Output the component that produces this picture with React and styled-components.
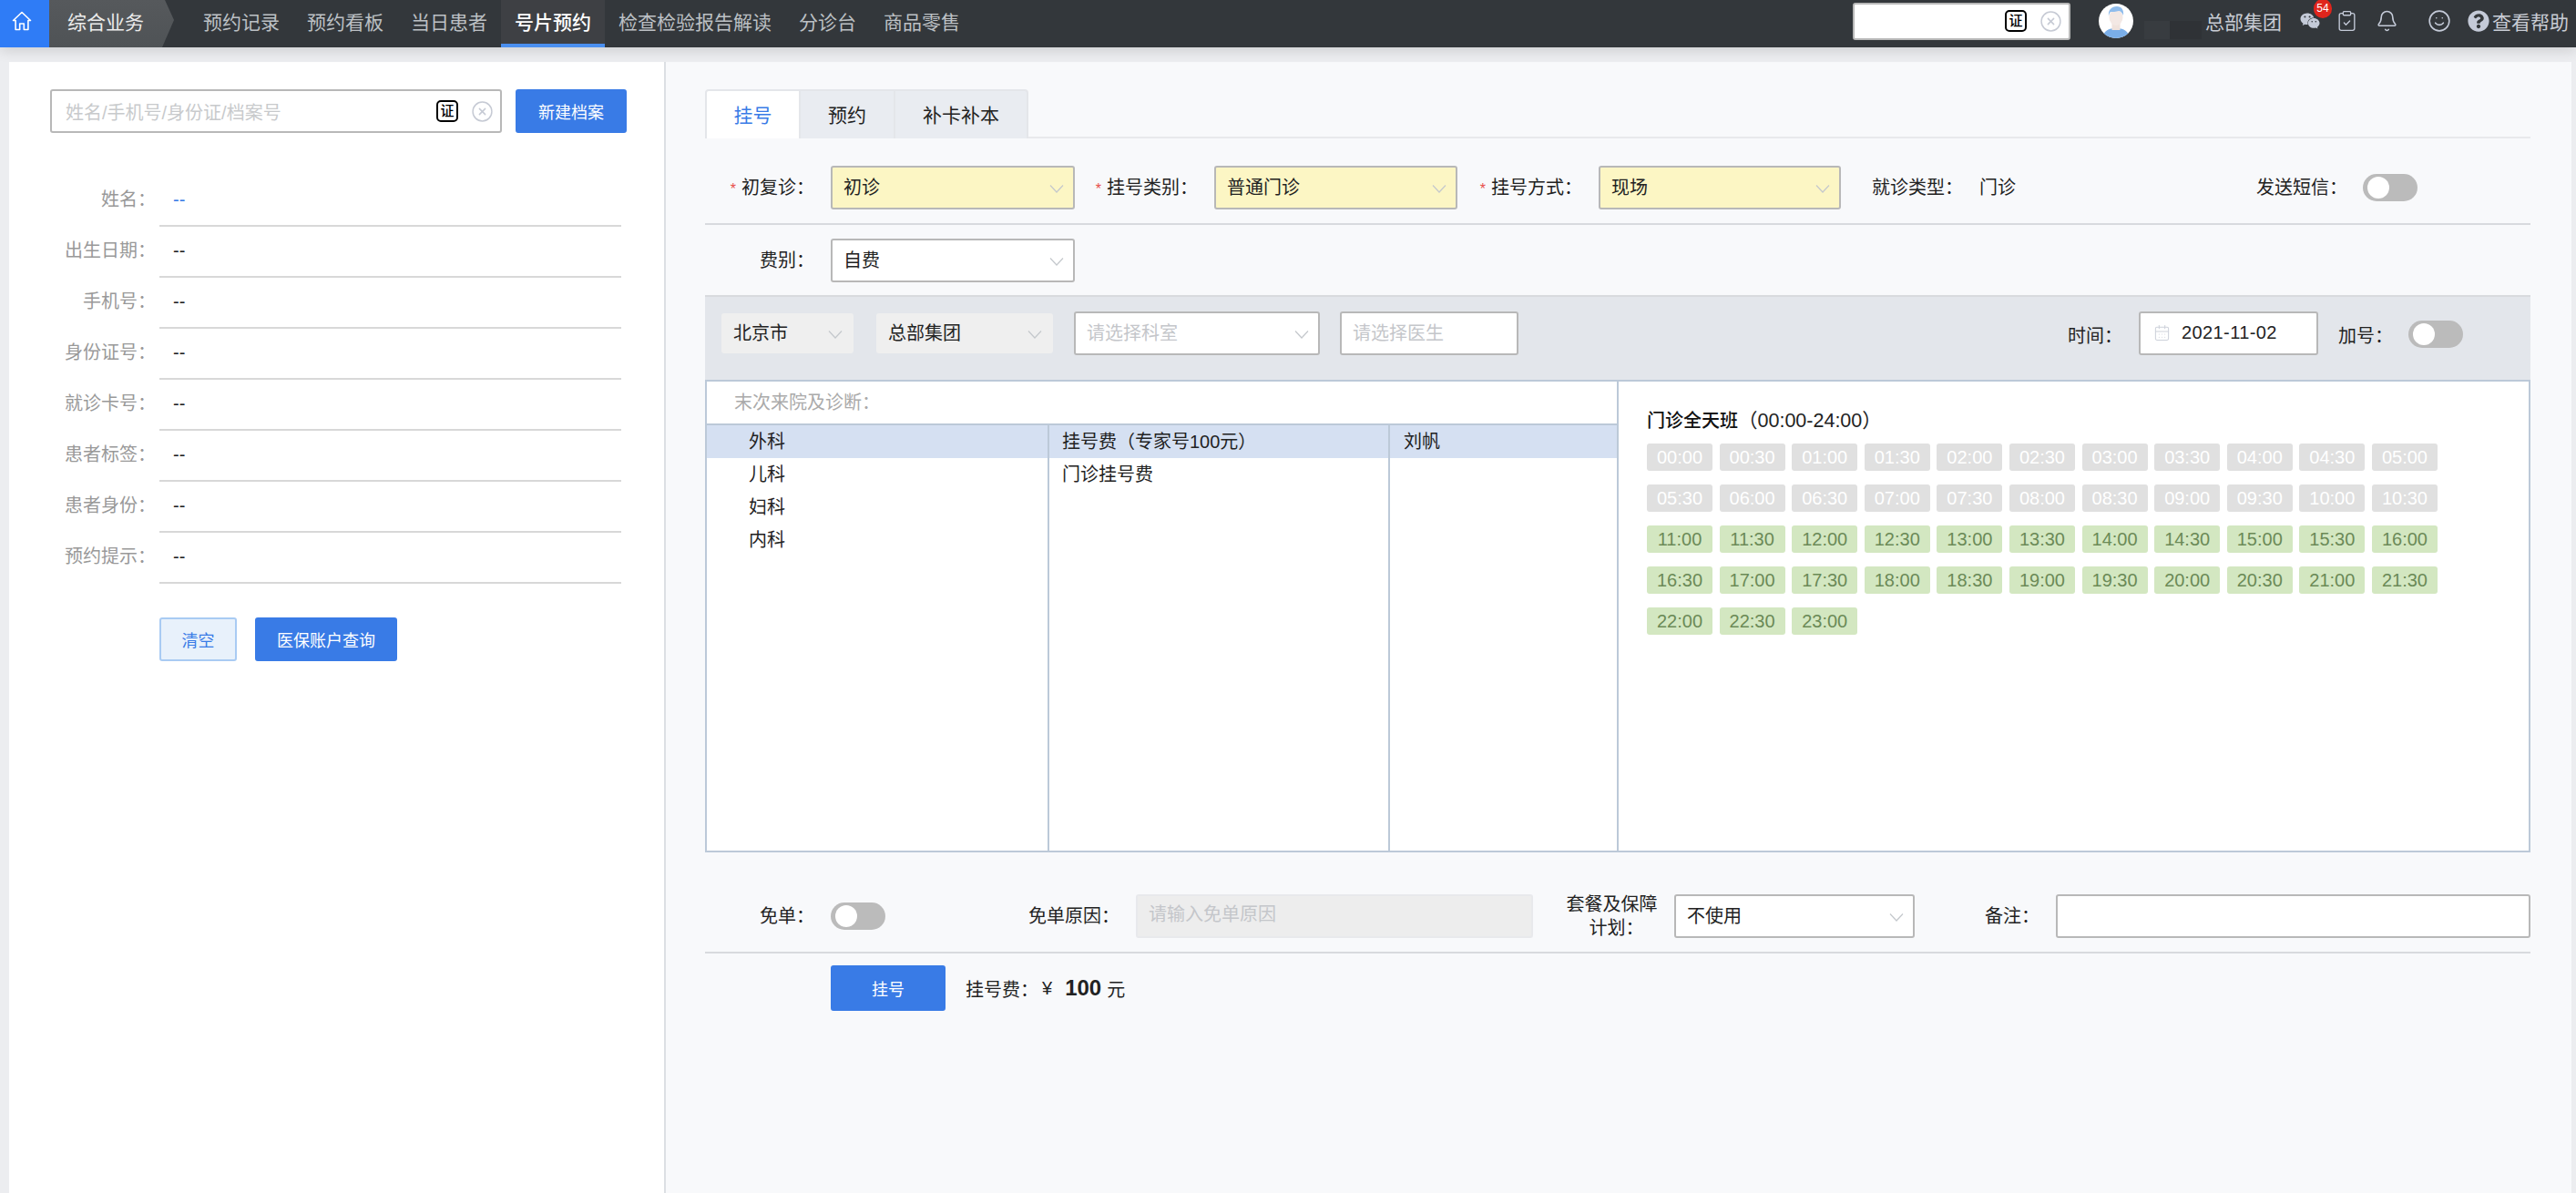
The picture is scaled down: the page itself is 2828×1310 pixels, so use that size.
import React from 'react';
import styled, { createGlobalStyle, css } from 'styled-components';
import { Bell, Smile, ClipboardCheck, CircleX, CalendarDays } from 'lucide-react';
import { FaWeixin, FaQuestionCircle } from 'react-icons/fa';

const GlobalStyle = createGlobalStyle`
  html, body {
    margin: 0;
    padding: 0;
    background: #ecedf0;
  }
  * {
    box-sizing: border-box;
  }
  body {
    font-family: "Liberation Sans", "Noto Sans CJK SC", sans-serif;
    font-size: 20px;
    color: #222;
  }
`;

const Page = styled.div`
  width: 2828px;
  height: 1310px;
  overflow: hidden;
  display: flex;
  flex-direction: column;
`;

const TopBar = styled.header`
  height: 52px;
  flex: none;
  background: #33373b;
  display: flex;
  position: relative;
  z-index: 2;
  box-shadow: 0 3px 14px rgba(0, 0, 0, 0.14);
`;

const HomeButton = styled.div`
  width: 54px;
  height: 52px;
  background: #2f7cf6;
  display: flex;
  align-items: center;
  justify-content: center;
  padding-right: 6px;
  padding-bottom: 6px;
`;

const Crumb = styled.div`
  width: 137px;
  height: 52px;
  background: linear-gradient(to bottom, #56595c, #4f5356);
  clip-path: polygon(0 0, 127px 0, 137px 22px, 124px 52px, 0 52px);
  color: #ececec;
  font-size: 21px;
  padding: 0 0 6px 20px;
  display: flex;
  align-items: center;
`;

const Nav = styled.nav`
  display: flex;
  margin-left: 17px;
`;

const NavItem = styled.div`
  height: 52px;
  padding: 0 15px 2px;
  display: flex;
  align-items: center;
  white-space: nowrap;
  font-size: 21px;
  color: #bcc0c4;
  border-bottom: 4px solid transparent;
  ${p =>
    p.$active &&
    css`
      color: #fff;
      font-weight: 500;
      background: #3e4044;
      border-bottom-color: #4a8fef;
    `}
`;

const TopRight = styled.div`
  margin-left: auto;
  height: 46px;
  display: flex;
  align-items: center;
  color: #c8ccd4;
`;

const Search = styled.div`
  width: ${p => p.$w}px;
  height: ${p => p.$h}px;
  background: #fff;
  border: 2px solid #b8b8b8;
  border-radius: 3px;
  display: flex;
  align-items: center;
  padding: 0 7px 0 15px;
  color: #c8cacc;
`;

const SearchText = styled.span`
  flex: 1;
  white-space: nowrap;
`;

const CertMark = styled.span`
  width: 24px;
  height: 24px;
  border: 2px solid #000;
  border-radius: 5px;
  color: #000;
  background: #fff;
  font-size: 15px;
  font-weight: 500;
  line-height: 20px;
  text-align: center;
  flex: none;
  margin-right: 14px;
`;

const ClearIcon = styled(CircleX)`
  width: 25px;
  height: 25px;
  color: #c6cad4;
  flex: none;
`;

const Avatar = styled.svg`
  width: 38px;
  height: 38px;
  margin-left: 31px;
  flex: none;
`;

const Masked = styled.div`
  width: 63px;
  height: 20px;
  margin: 20px 0 0 12px;
  background: linear-gradient(to right, #383c40 45%, #2f3236 45%);
`;

const OrgName = styled.span`
  margin-left: 4px;
  font-size: 21px;
  white-space: nowrap;
`;

const IconSlot = styled.div`
  position: relative;
  display: flex;
  align-items: center;
  width: ${p => p.$w}px;
  justify-content: center;
  margin-left: ${p => p.$ml}px;
  color: #c4cad8;
`;

const Badge = styled.span`
  position: absolute;
  top: -13px;
  left: 15px;
  width: 20px;
  height: 21px;
  border-radius: 10px;
  background: #e0251c;
  color: #fff;
  font-size: 12px;
  line-height: 21px;
  text-align: center;
`;

const HelpText = styled.span`
  margin: 0 8px 0 3px;
  font-size: 21px;
  white-space: nowrap;
`;

const Body = styled.div`
  flex: 1;
  display: flex;
  padding: 16px 5px 0 10px;
  min-height: 0;
`;

const LeftPanel = styled.aside`
  width: 719px;
  flex: none;
  background: #fff;
  padding: 30px 0 0 45px;
`;

const SearchRow = styled.div`
  display: flex;
  gap: 15px;
  margin-bottom: 47px;
`;

const Button = styled.button`
  height: ${p => p.$h || 48}px;
  width: ${p => p.$w}px;
  border: 2px solid ${p => (p.$light ? '#a9cbf3' : '#397be6')};
  background: ${p => (p.$light ? '#e8f1fb' : '#397be6')};
  color: ${p => (p.$light ? '#397be6' : '#fff')};
  border-radius: 3px;
  font: inherit;
  font-size: 18px;
  padding: 0;
  flex: none;
`;

const InfoRow = styled.div`
  display: flex;
  height: 56px;
`;

const InfoLabel = styled.div`
  width: 106px;
  text-align: right;
  color: #999;
  line-height: 52px;
  white-space: nowrap;
  font-feature-settings: "halt";
`;

const InfoValue = styled.div`
  width: 507px;
  margin-left: 14px;
  padding-left: 15px;
  border-bottom: 2px solid #d8d8d8;
  line-height: 52px;
  color: ${p => (p.$link ? '#397be6' : '#222')};
`;

const InfoActions = styled.div`
  display: flex;
  gap: 20px;
  margin: 37px 0 0 120px;
`;

const RightPanel = styled.main`
  flex: 1;
  background: #f8f9fb;
  border-left: 2px solid #dcdfe3;
  padding: 30px 45px 0 43px;
`;

const Tabs = styled.div`
  display: flex;
  height: 54px;
  border-bottom: 2px solid #e8e9ec;
`;

const Tab = styled.div`
  width: ${p => p.$w}px;
  height: 54px;
  padding-bottom: 2px;
  display: flex;
  align-items: center;
  justify-content: center;
  font-size: 21px;
  background: ${p => (p.$active ? '#fff' : '#e9ecf1')};
  color: ${p => (p.$active ? '#397be6' : '#222')};
  border: 2px solid #e4e6ea;
  border-bottom: none;
  border-left-width: ${p => (p.$active ? 2 : 0)}px;
  border-radius: ${p => (p.$active ? '4px 0 0 0' : '0')};
  &:last-child {
    border-radius: 0 4px 0 0;
  }
`;

const FormRow = styled.div`
  display: flex;
  align-items: center;
  padding: ${p => p.$top}px 0 ${p => p.$bottom}px;
  ${p => p.$line && 'border-bottom: 2px solid #d8dade;'}
`;

const FieldLabel = styled.label`
  width: ${p => p.$w}px;
  margin-right: ${p => p.$mr || 28}px;
  padding-bottom: 4px;
  flex: none;
  text-align: right;
  white-space: nowrap;
  font-feature-settings: "halt";
`;

const PlainValue = styled.span`
  padding-bottom: 4px;
`;

const Required = styled.i`
  color: #e8504a;
  font-style: normal;
  font-size: 16px;
  margin-right: 6px;
`;

const PushRight = styled.div`
  margin-left: auto;
  margin-right: ${p => p.$mr}px;
  display: flex;
  align-items: center;
`;

const Select = styled.div`
  width: ${p => p.$w}px;
  height: ${p => p.$h || 48}px;
  flex: none;
  display: flex;
  align-items: center;
  justify-content: space-between;
  padding: 0 10px 3px 12px;
  border-radius: 3px;
  border: 2px solid #b8b8b8;
  background: #fff;
  ${p => p.$ml && `margin-left: ${p.$ml}px;`}
  ${p => p.$mt && `margin-top: ${p.$mt}px;`}
  ${p => p.$tone === 'yellow' && 'background: #fcf6c4;'}
  ${p =>
    p.$tone === 'plain' &&
    css`
      background: #efefef;
      border-color: #efefef;
      padding-left: 11px;
    `}
`;

const Placeholder = styled.span`
  color: #c4c6ca;
  white-space: nowrap;
`;

const ChevronSvg = styled.svg`
  width: 16px;
  height: 9px;
  flex: none;
  fill: none;
  stroke: #c4c8cc;
  stroke-width: 1.2;
  margin-top: 5px;
`;

const Chevron = () => (
  <ChevronSvg viewBox="0 0 16 9">
    <polyline points="1,0.5 8,8 15,0.5" />
  </ChevronSvg>
);

const Toggle = styled.div`
  width: 60px;
  height: 30px;
  flex: none;
  border-radius: 15px;
  background: #bbb;
  padding: 3px 0 0 5px;
  ${p => p.$mt && `margin-top: ${p.$mt}px;`}
  ${p => p.$ml && `margin-left: ${p.$ml}px;`}
  &::after {
    content: '';
    display: block;
    width: 24px;
    height: 24px;
    border-radius: 50%;
    background: #fff;
  }
`;

const FilterBar = styled.div`
  height: 93px;
  background: #e3e6eb;
  border-top: 2px solid #d8dade;
  padding: 16px 0 0 18px;
  display: flex;
  align-items: flex-start;
`;

const FilterLabel = styled.span`
  margin: 6px 0 0 ${p => p.$ml}px;
  line-height: 28px;
  white-space: nowrap;
  font-feature-settings: "halt";
`;

const DateBox = styled.div`
  width: 197px;
  height: 48px;
  margin-left: 28px;
  background: #fff;
  border: 2px solid #b8b8b8;
  border-radius: 3px;
  display: flex;
  align-items: center;
  gap: 12px;
  padding: 0 0 2px 14px;
  letter-spacing: 0.4px;
`;

const DateIcon = styled(CalendarDays)`
  width: 19px;
  height: 19px;
  color: #cdd1da;
`;

const Schedule = styled.section`
  height: 519px;
  display: flex;
  background: #fff;
  border: 2px solid #bcc9d8;
`;

const DeptArea = styled.div`
  width: 1001px;
  flex: none;
  display: flex;
  flex-direction: column;
  border-right: 2px solid #bcc9d8;
`;

const LastVisit = styled.div`
  height: 48px;
  flex: none;
  border-bottom: 2px solid #bcc9d8;
  color: #aaa;
  padding-left: 30px;
  line-height: 46px;
  font-feature-settings: "halt";
`;

const Columns = styled.div`
  flex: 1;
  display: flex;
`;

const Column = styled.div`
  width: ${p => p.$w}px;
  flex: ${p => (p.$w ? 'none' : '1')};
  ${p => p.$w && 'border-right: 2px solid #bcc9d8;'}
`;

const ListRow = styled.div`
  height: 36px;
  line-height: 36px;
  padding-left: ${p => p.$indent}px;
  background: ${p => (p.$active ? '#d5e0f2' : 'transparent')};
`;

const SlotArea = styled.div`
  flex: 1;
  padding: 29px 0 0 31px;
`;

const SlotTitle = styled.div`
  height: 28px;
  line-height: 28px;
  margin-bottom: 11px;
  white-space: nowrap;
  strong {
    font-weight: 500;
    color: #111;
  }
  span {
    font-size: 21.5px;
  }
`;

const SlotGrid = styled.div`
  display: grid;
  grid-template-columns: repeat(11, 72px);
  column-gap: 7.6px;
  row-gap: 15px;
`;

const Slot = styled.div`
  height: 30px;
  line-height: 30px;
  text-align: center;
  border-radius: 3px;
  background: ${p => (p.$open ? '#d3e7c1' : '#e0e0e0')};
  color: ${p => (p.$open ? '#6b8a57' : '#fff')};
`;

const DisabledInput = styled.div`
  width: 436px;
  height: 48px;
  flex: none;
  background: #ededed;
  border: 2px solid #e8e9ec;
  border-radius: 3px;
  padding-left: 12px;
  line-height: 41px;
`;

const PlanLabel = styled.label`
  width: 105px;
  margin: -2px 16px -2px 34px;
  flex: none;
  text-align: center;
  line-height: 26px;
  font-feature-settings: "halt";
`;

const TextInput = styled.div`
  flex: 1;
  height: 48px;
  background: #fff;
  border: 2px solid #b8b8b8;
  border-radius: 3px;
`;

const SubmitRow = styled.div`
  display: flex;
  align-items: center;
  padding: 13px 0 0 138px;
`;

const FeeText = styled.div`
  margin-left: 22px;
  white-space: nowrap;
  display: flex;
  align-items: center;
  em {
    font-style: normal;
    margin-left: 4px;
  }
  strong {
    font-size: 24px;
    margin: 0 6px 0 14px;
  }
`;

const patientFields = [
  { label: '姓名：', link: true },
  { label: '出生日期：' },
  { label: '手机号：' },
  { label: '身份证号：' },
  { label: '就诊卡号：' },
  { label: '患者标签：' },
  { label: '患者身份：' },
  { label: '预约提示：' }
];

const navItems = ['预约记录', '预约看板', '当日患者', '号片预约', '检查检验报告解读', '分诊台', '商品零售'];

const timeSlots = Array.from({ length: 47 }, (_, i) => {
  const h = String(Math.floor(i / 2)).padStart(2, '0');
  return `${h}:${i % 2 ? '30' : '00'}`;
});

const HomeIcon = () => (
  <svg width="22" height="22" viewBox="0 0 22 22" fill="none" stroke="#fff" strokeWidth="1.6" strokeLinejoin="round">
    <path d="M1.5 10.5 11 1.5l9.5 9h-2.6V20.5h-4.6v-6.5H8.7v6.5H4.1V10.5z" />
  </svg>
);

const UserAvatar = () => (
  <Avatar viewBox="0 0 38 38">
    <defs>
      <clipPath id="avatar-clip">
        <circle cx="19" cy="19" r="19" />
      </clipPath>
    </defs>
    <g clipPath="url(#avatar-clip)">
      <rect width="38" height="38" fill="#fff" />
      <path d="M4 38c1-8 7-11 15-11s14 3 15 11z" fill="#7aaee8" />
      <rect x="14.5" y="19" width="9" height="10" fill="#efe2dc" />
      <ellipse cx="19" cy="15" rx="7.5" ry="9" fill="#f3e8e4" />
      <path d="M11 14c-1-7 3-11 9-11 5 0 8 4 7 10-1-3-3-5-5-5-3 1-7 1-9 1-1 1-2 3-2 5z" fill="#8fbcec" />
    </g>
  </Avatar>
);

const App = () => (
  <Page>
    <GlobalStyle />
    <TopBar>
      <HomeButton>
        <HomeIcon />
      </HomeButton>
      <Crumb>综合业务</Crumb>
      <Nav>
        {navItems.map(item => (
          <NavItem key={item} $active={item === '号片预约'}>
            {item}
          </NavItem>
        ))}
      </Nav>
      <TopRight>
        <Search $w={239} $h={41}>
          <SearchText />
          <CertMark>证</CertMark>
          <ClearIcon strokeWidth={1.4} />
        </Search>
        <UserAvatar />
        <Masked />
        <OrgName>总部集团</OrgName>
        <IconSlot $ml={20} $w={22}>
          <FaWeixin size={22} />
          <Badge>54</Badge>
        </IconSlot>
        <IconSlot $ml={17} $w={25}>
          <ClipboardCheck size={28} strokeWidth={1.3} />
        </IconSlot>
        <IconSlot $ml={19} $w={25}>
          <Bell size={28} strokeWidth={1.5} />
        </IconSlot>
        <IconSlot $ml={32} $w={26}>
          <Smile size={28} strokeWidth={1.5} />
        </IconSlot>
        <IconSlot $ml={18} $w={24}>
          <FaQuestionCircle size={24} />
        </IconSlot>
        <HelpText>查看帮助</HelpText>
      </TopRight>
    </TopBar>

    <Body>
      <LeftPanel>
        <SearchRow>
          <Search $w={496} $h={48}>
            <SearchText>姓名/手机号/身份证/档案号</SearchText>
            <CertMark>证</CertMark>
            <ClearIcon strokeWidth={1.4} />
          </Search>
          <Button $w={122}>新建档案</Button>
        </SearchRow>
        {patientFields.map(field => (
          <InfoRow key={field.label}>
            <InfoLabel>{field.label}</InfoLabel>
            <InfoValue $link={field.link}>--</InfoValue>
          </InfoRow>
        ))}
        <InfoActions>
          <Button $w={85} $light>
            清空
          </Button>
          <Button $w={156}>医保账户查询</Button>
        </InfoActions>
      </LeftPanel>

      <RightPanel>
        <Tabs>
          <Tab $w={105} $active>
            挂号
          </Tab>
          <Tab $w={104}>预约</Tab>
          <Tab $w={146}>补卡补本</Tab>
        </Tabs>

        <FormRow $top={30} $bottom={15} $line>
          <FieldLabel $w={110}>
            <Required>*</Required>初复诊：
          </FieldLabel>
          <Select $w={268} $tone="yellow">
            初诊
            <Chevron />
          </Select>
          <FieldLabel $w={125}>
            <Required>*</Required>挂号类别：
          </FieldLabel>
          <Select $w={267} $tone="yellow">
            普通门诊
            <Chevron />
          </Select>
          <FieldLabel $w={127}>
            <Required>*</Required>挂号方式：
          </FieldLabel>
          <Select $w={266} $tone="yellow">
            现场
            <Chevron />
          </Select>
          <FieldLabel $w={124}>就诊类型：</FieldLabel>
          <PlainValue>门诊</PlainValue>
          <PushRight $mr={124}>
            <FieldLabel $w={92} $mr={27}>
              发送短信：
            </FieldLabel>
            <Toggle />
          </PushRight>
        </FormRow>

        <FormRow $top={15} $bottom={14}>
          <FieldLabel $w={110}>费别：</FieldLabel>
          <Select $w={268}>
            自费
            <Chevron />
          </Select>
        </FormRow>

        <FilterBar>
          <Select $w={145} $h={44} $mt={2} $tone="plain">
            北京市
            <Chevron />
          </Select>
          <Select $w={194} $h={44} $mt={2} $ml={25} $tone="plain">
            总部集团
            <Chevron />
          </Select>
          <Select $w={270} $ml={23}>
            <Placeholder>请选择科室</Placeholder>
            <Chevron />
          </Select>
          <Select $w={196} $ml={22}>
            <Placeholder>请选择医生</Placeholder>
          </Select>
          <PushRight $mr={74}>
            <FilterLabel $ml={0}>时间：</FilterLabel>
            <DateBox>
              <DateIcon strokeWidth={1.3} />
              2021-11-02
            </DateBox>
            <FilterLabel $ml={22}>加号：</FilterLabel>
            <Toggle $mt={2} $ml={27} />
          </PushRight>
        </FilterBar>

        <Schedule>
          <DeptArea>
            <LastVisit>末次来院及诊断：</LastVisit>
            <Columns>
              <Column $w={376}>
                <ListRow $indent={46} $active>
                  外科
                </ListRow>
                <ListRow $indent={46}>儿科</ListRow>
                <ListRow $indent={46}>妇科</ListRow>
                <ListRow $indent={46}>内科</ListRow>
              </Column>
              <Column $w={374}>
                <ListRow $indent={14} $active>
                  挂号费（专家号100元）
                </ListRow>
                <ListRow $indent={14}>门诊挂号费</ListRow>
              </Column>
              <Column>
                <ListRow $indent={15} $active>
                  刘帆
                </ListRow>
              </Column>
            </Columns>
          </DeptArea>
          <SlotArea>
            <SlotTitle>
              <strong>门诊全天班</strong>
              <span>（00:00-24:00）</span>
            </SlotTitle>
            <SlotGrid>
              {timeSlots.map((time, i) => (
                <Slot key={time} $open={i >= 22}>
                  {time}
                </Slot>
              ))}
            </SlotGrid>
          </SlotArea>
        </Schedule>

        <FormRow $top={46} $bottom={15} $line>
          <FieldLabel $w={110}>免单：</FieldLabel>
          <Toggle />
          <FieldLabel $w={247}>免单原因：</FieldLabel>
          <DisabledInput>
            <Placeholder>请输入免单原因</Placeholder>
          </DisabledInput>
          <PlanLabel>套餐及保障计划：</PlanLabel>
          <Select $w={264}>
            不使用
            <Chevron />
          </Select>
          <FieldLabel $w={127}>备注：</FieldLabel>
          <TextInput />
        </FormRow>

        <SubmitRow>
          <Button $w={126} $h={50}>
            挂号
          </Button>
          <FeeText>
            挂号费：<em>¥</em>
            <strong>100</strong>元
          </FeeText>
        </SubmitRow>
      </RightPanel>
    </Body>
  </Page>
);

export default App;
